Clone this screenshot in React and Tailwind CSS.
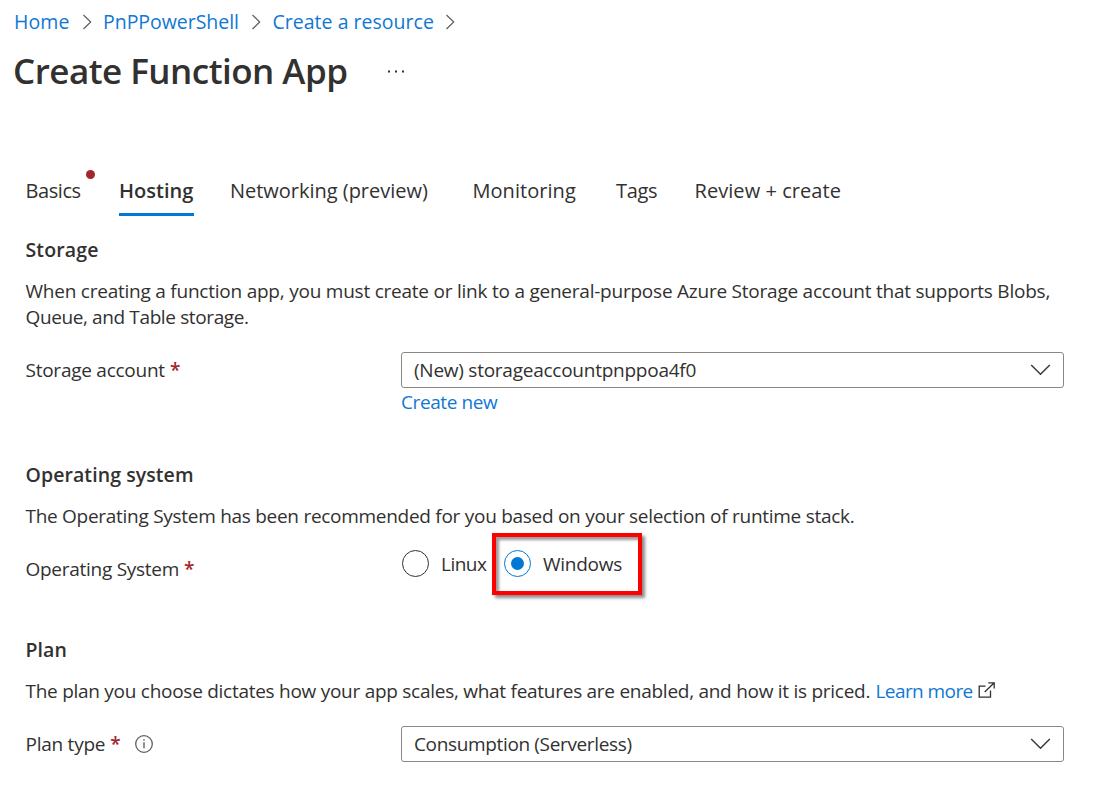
import React from "react";

function Crumb({ children, className }) {
  return (
    <a className={`shrink-0 whitespace-nowrap text-[19.5px] text-[#0f78d4] ${className}`}>{children}</a>
  );
}

function CrumbArrow({ className }) {
  return (
    <svg className={`h-4 w-[10px] shrink-0 ${className}`} viewBox="0 0 10 16" fill="none" stroke="#605e5c" strokeWidth="1.2">
      <path d="M0.5 1 7.7 8 0.5 15" />
    </svg>
  );
}

function Select({ children, className }) {
  return (
    <div className="flex h-9 w-[663px] items-center justify-between rounded-[3px] border border-[#8a8886] bg-white pl-[12px] pr-[12px]">
      <span className={`whitespace-nowrap ${className}`}>{children}</span>
      <svg className="h-3 w-[21px]" viewBox="0 0 21 12" fill="none" stroke="#3b3a39" strokeWidth="1.5">
        <path d="M1.2 1 10.5 10.3 19.8 1" />
      </svg>
    </div>
  );
}

function Star() {
  return <span className="ml-[5px] font-semibold text-[#a4262c]">*</span>;
}

function Heading({ children, className }) {
  return <h2 className={`whitespace-nowrap text-[19.5px] font-semibold ${className}`}>{children}</h2>;
}

export default function App() {
  return (
    <main className="h-[793px] w-[1109px] overflow-hidden bg-white font-['Open_Sans','Noto_Sans',sans-serif] text-[19px] leading-[26px] text-[#323130]">
      <nav className="flex h-[35px] items-center pl-[14px] pt-[9px]">
        <Crumb className="w-[69px] tracking-[0.1px]">Home</Crumb>
        <CrumbArrow className="mr-[10px]" />
        <Crumb className="w-[149px] tracking-[-0.03px]">PnPPowerShell</Crumb>
        <CrumbArrow className="mr-[10.5px]" />
        <Crumb className="w-[173.5px] tracking-[0.02px]">Create a resource</Crumb>
        <CrumbArrow />
      </nav>

      <header className="flex h-[72px] items-center pl-[13px]">
        <h1 className="w-[374px] whitespace-nowrap text-[35px] font-semibold tracking-[-0.52px]">Create Function App</h1>
        <svg className="h-[3px] w-[18px]" viewBox="0 0 18 3" fill="#323130">
          <rect x="1" y="0.5" width="2" height="2" />
          <rect x="8" y="0.5" width="2" height="2" />
          <rect x="15" y="0.5" width="2" height="2" />
        </svg>
      </header>

      <div className="pl-[25.5px] pt-[71px]">
        <div className="flex h-[38px] whitespace-nowrap text-[20px]">
          <div className="relative w-[93.5px] tracking-[-0.42px]">
            Basics
            <span className="absolute left-[60.5px] top-[-8px] size-[9px] rounded-full bg-[#a4262c]" />
          </div>
          <div className="mr-[36px] w-[75px] border-b-[3px] border-[#0078d4] font-semibold tracking-[0px]">Hosting</div>
          <div className="w-[242.5px] tracking-[-0.02px]">Networking (preview)</div>
          <div className="w-[143.5px] tracking-[0.05px]">Monitoring</div>
          <div className="w-[78.5px] tracking-[-0.3px]">Tags</div>
          <div className="tracking-[0.06px]">Review + create</div>
        </div>

        <section className="h-[225px] pt-[21px]">
          <Heading className="tracking-[0.15px]">Storage</Heading>
          <p className="mt-[15px] whitespace-nowrap">
            <span className="tracking-[-0.23px]">When creating a function app, you must create or link to a general-purpose Azure Storage account that supports Blobs,</span>
            <br />
            <span className="tracking-[-0.38px]">Queue, and Table storage.</span>
          </p>
          <div className="mt-[22px] flex">
            <div className="w-[375.5px] pt-[5px] tracking-[-0.25px]">Storage account<Star /></div>
            <div>
              <Select className="tracking-[-0.25px]">(New) storageaccountpnppoa4f0</Select>
              <a className="mt-px block tracking-[-0.4px] text-[#0f78d4]">Create new</a>
            </div>
          </div>
        </section>

        <section className="h-[175px] pt-[21px]">
          <Heading className="tracking-[0.08px]">Operating system</Heading>
          <p className="mt-[15px] whitespace-nowrap tracking-[-0.28px]">The Operating System has been recommended for you based on your selection of runtime stack.</p>
          <div className="mt-[4px] flex h-[62px]">
            <div className="w-[376.5px] pt-[23px] tracking-[-0.27px]">Operating System<Star /></div>
            <div className="flex w-[90px] items-center gap-3">
              <span className="mb-px size-[27px] shrink-0 rounded-full border-[1.5px] border-[#323130]" />
              <span className="tracking-[-0.5px]">Linux</span>
            </div>
            <div className="flex h-[62px] w-[150px] items-center gap-3 border-4 border-[#fd0000] pl-2 shadow-[3px_3px_3px_rgba(0,0,0,0.45),inset_3px_3px_3px_rgba(0,0,0,0.4)]">
              <span className="mb-px flex size-[27px] shrink-0 items-center justify-center rounded-full border border-[#0078d4]">
                <span className="size-[13px] rounded-full bg-[#0078d4]" />
              </span>
              <span className="tracking-[-0.25px]">Windows</span>
            </div>
          </div>
        </section>

        <section className="pt-[21px]">
          <Heading className="tracking-[0.1px]">Plan</Heading>
          <div className="mt-[15px] flex whitespace-nowrap">
            <p className="w-[850px] tracking-[-0.27px]">The plan you choose dictates how your app scales, what features are enabled, and how it is priced.</p>
            <a className="w-[102.5px] tracking-[-0.58px] text-[#0f78d4]">Learn more</a>
            <svg className="mt-[4px] h-[17px] w-[17px]" viewBox="0 0 17 17" fill="none" stroke="#323130" strokeWidth="1.3">
              <path d="M7.5 4.2H1.2v11h11.3V8.5M10.3.8h5.9v5.7M16 1 6.7 10" />
            </svg>
          </div>
          <div className="mt-[22px] flex">
            <div className="flex w-[375.5px] items-center tracking-[-0.25px]">
              <span>Plan type</span><Star />
              <svg className="ml-[14.5px] size-[18px]" viewBox="0 0 18 18" fill="none" stroke="#605e5c">
                <circle cx="9" cy="9" r="8.3" strokeWidth="1.3" />
                <path d="M9 7.3v6M9 4.3v1.5" strokeWidth="1.4" />
              </svg>
            </div>
            <Select className="tracking-[-0.35px]">Consumption (Serverless)</Select>
          </div>
        </section>
      </div>
    </main>
  );
}
